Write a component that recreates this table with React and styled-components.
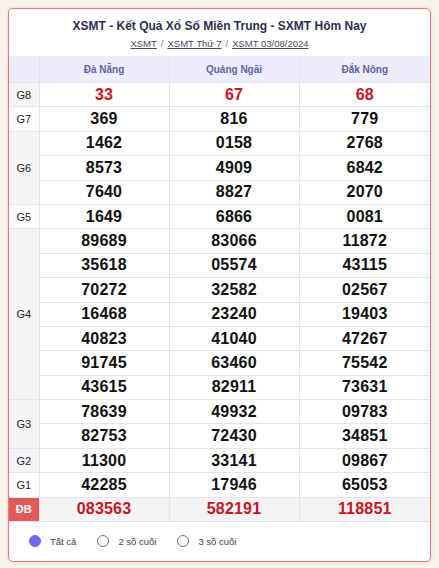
import React from "react";
import styled, { createGlobalStyle } from "styled-components";

const Global = createGlobalStyle`
  html, body { margin: 0; padding: 0; }
  body {
    background: #f8f4ec;
    font-family: "Liberation Sans", Arial, sans-serif;
    padding: 8px 8px 7px 8px;
  }
`;

const Card = styled.div`
  background: #fff;
  border: 1px solid #e07a7a;
  border-radius: 5px;
  overflow: hidden;
  box-shadow: 0 0 3px rgba(224, 122, 122, 0.35);
`;

const Head = styled.div`
  display: flex;
  flex-direction: column;
  align-items: center;
  padding: 9px 0 6px;
  gap: 4px;
`;

const Title = styled.h1`
  margin: 0;
  font-size: 12px;
  font-weight: 700;
  color: #2c2f52;
  line-height: 16px;
`;

const Crumbs = styled.div`
  display: flex;
  gap: 4px;
  font-size: 9.5px;
  line-height: 12px;
  color: #777;
`;

const Crumb = styled.a`
  color: #4a4a66;
  text-decoration: underline;
`;

const Table = styled.table`
  width: 100%;
  border-collapse: collapse;
  table-layout: fixed;
`;

const Th = styled.th`
  background: #ececfb;
  color: #6464a8;
  font-size: 10px;
  font-weight: 700;
  height: 26px;
  padding: 0;
  border: 1px solid #e2e2ec;
  border-top: none;
  &:first-child { border-left: none; }
  &:last-child { border-right: none; }
`;

const Label = styled.td`
  text-align: center;
  font-size: 11px;
  padding: 0;
  border: 1px solid #e3e3e9;
  border-left: none;
  background: ${(p) => (p.$special ? "#e05a5a" : p.$shade ? "#f5f5f8" : "#fff")};
  color: ${(p) => (p.$special ? "#fff" : "#222")};
  font-weight: ${(p) => (p.$special ? 700 : 400)};
`;

const Num = styled.td`
  height: 23.4px;
  padding: 0;
  text-align: center;
  font-size: 16px;
  font-weight: 700;
  letter-spacing: 0.2px;
  color: ${(p) => (p.$red ? "#c8141c" : "#111")};
  background: ${(p) => (p.$shade ? "#f4f4f7" : "#fff")};
  border: 1px solid #e3e3e9;
  &:last-child { border-right: none; }
`;

const Footer = styled.div`
  display: flex;
  align-items: center;
  padding: 13px 0 14px 20px;
`;

const Option = styled.label`
  display: flex;
  align-items: center;
  gap: 9px;
  font-size: 9.5px;
  color: #444;
  margin-right: 21px;
`;

const Radio = styled.span`
  width: 12px;
  height: 12px;
  border-radius: 50%;
  box-sizing: border-box;
  background: ${(p) => (p.$on ? "#6b6bf0" : "#fff")};
  border: 1px solid ${(p) => (p.$on ? "#6b6bf0" : "#777")};
`;

const provinces = ["Đà Nẵng", "Quảng Ngãi", "Đắk Nông"];

const prizes = [
  { g: "G8", shade: true, red: true, rows: [["33", "67", "68"]] },
  { g: "G7", rows: [["369", "816", "779"]] },
  { g: "G6", shade: true, rows: [["1462", "0158", "2768"], ["8573", "4909", "6842"], ["7640", "8827", "2070"]] },
  { g: "G5", rows: [["1649", "6866", "0081"]] },
  {
    g: "G4",
    shade: true,
    rows: [
      ["89689", "83066", "11872"],
      ["35618", "05574", "43115"],
      ["70272", "32582", "02567"],
      ["16468", "23240", "19403"],
      ["40823", "41040", "47267"],
      ["91745", "63460", "75542"],
      ["43615", "82911", "73631"],
    ],
  },
  { g: "G3", shade: true, rows: [["78639", "49932", "09783"], ["82753", "72430", "34851"]] },
  { g: "G2", shade: true, rows: [["11300", "33141", "09867"]] },
  { g: "G1", rows: [["42285", "17946", "65053"]] },
  { g: "ĐB", special: true, red: true, rowShade: true, rows: [["083563", "582191", "118851"]] },
];

export default function App() {
  return (
    <>
      <Global />
      <Card>
        <Head>
          <Title>XSMT - Kết Quả Xổ Số Miền Trung - SXMT Hôm Nay</Title>
          <Crumbs>
            <Crumb>XSMT </Crumb>/<Crumb>XSMT Thứ 7 </Crumb>/<Crumb>XSMT 03/08/2024</Crumb>
          </Crumbs>
        </Head>
        <Table>
          <colgroup>
            <col style={{ width: 30 }} />
            <col style={{ width: 130 }} />
            <col style={{ width: 130 }} />
            <col />
          </colgroup>
          <thead>
            <tr>
              <Th />
              {provinces.map((p) => (
                <Th key={p}>{p}</Th>
              ))}
            </tr>
          </thead>
          <tbody>
            {prizes.map((pr) =>
              pr.rows.map((r, i) => (
                <tr key={pr.g + i}>
                  {i === 0 && (
                    <Label rowSpan={pr.rows.length} $shade={pr.shade} $special={pr.special}>
                      {pr.g}
                    </Label>
                  )}
                  {r.map((n, j) => (
                    <Num key={j} $red={pr.red} $shade={pr.rowShade}>
                      {n}
                    </Num>
                  ))}
                </tr>
              ))
            )}
          </tbody>
        </Table>
        <Footer>
          <Option>
            <Radio $on />
            Tất cả
          </Option>
          <Option>
            <Radio />2 số cuối
          </Option>
          <Option>
            <Radio />3 số cuối
          </Option>
        </Footer>
      </Card>
    </>
  );
}
